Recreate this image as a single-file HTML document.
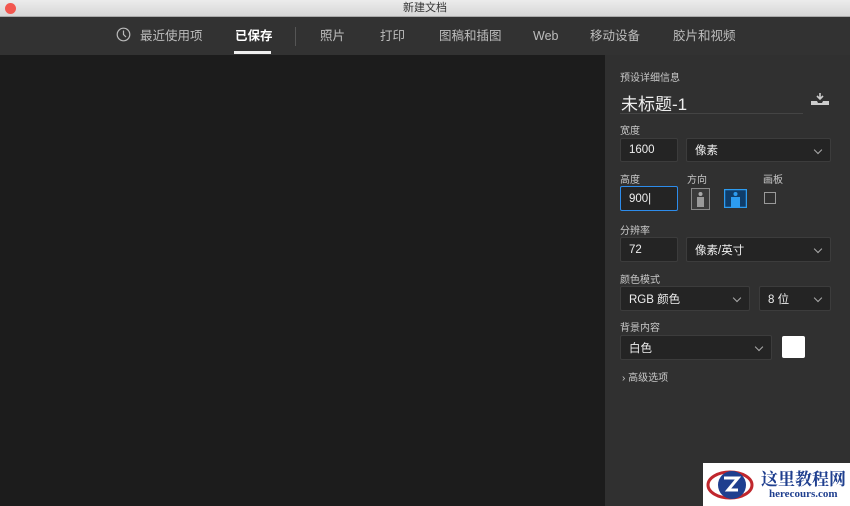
<!DOCTYPE html>
<html><head><meta charset="utf-8"><style>
*{box-sizing:border-box;margin:0;padding:0}
body{width:850px;height:506px;overflow:hidden;background:#1c1c1c;font-family:"Liberation Sans","Noto Sans CJK SC",sans-serif;position:relative}
.title{position:absolute;left:0;top:0;width:850px;height:17px;background:linear-gradient(#ececec,#d6d6d6);border-bottom:1px solid #aaa;text-align:center;font-size:11px;line-height:17px;color:#333}
.dot{position:absolute;left:5px;top:3px;width:11px;height:11px;border-radius:50%;background:#f2574f}
.tabs{position:absolute;left:0;top:17px;width:850px;height:38px;background:#323232}
.tab{position:absolute;top:11px;height:16px;line-height:16px;font-size:12.5px;color:#bdbdbd}
.canvas{position:absolute;left:0;top:55px;width:605px;height:451px;background:#1c1c1c}
.panel{position:absolute;left:605px;top:55px;width:245px;height:451px;background:#303030}
.lbl{position:absolute;font-size:10px;color:#c8c8c8}
.box{position:absolute;background:#242424;border:1px solid #3c3c3c;border-radius:2px;color:#eee;font-size:11.5px;padding-left:8px;display:flex;align-items:center}
.chev{position:absolute;right:9px;top:8px;width:6px;height:6px;border-right:1.3px solid #aaa;border-bottom:1.3px solid #aaa;transform:rotate(45deg)}
</style></head><body>
<div class="title"><div class="dot"></div>新建文档</div>
<div class="tabs">
<svg style="position:absolute;left:116px;top:10px" width="15" height="15" viewBox="0 0 15 15"><circle cx="7.5" cy="7.5" r="6.3" fill="none" stroke="#bbb" stroke-width="1.2"/><path d="M7.5 3.5V7.5L10 10" fill="none" stroke="#bbb" stroke-width="1.2"/></svg>
<div class="tab" style="left:140px">最近使用项</div>
<div class="tab" style="left:235px;color:#fff;font-weight:bold">已保存</div>
<div style="position:absolute;left:234px;top:34px;width:37px;height:3px;background:#eee"></div>
<div style="position:absolute;left:295px;top:10px;width:1px;height:19px;background:#555"></div>
<div class="tab" style="left:320px">照片</div>
<div class="tab" style="left:380px">打印</div>
<div class="tab" style="left:439px">图稿和插图</div>
<div class="tab" style="left:533px">Web</div>
<div class="tab" style="left:590px">移动设备</div>
<div class="tab" style="left:673px">胶片和视频</div>
</div>
<div class="canvas"></div>
<div class="panel">
<div class="lbl" style="left:15px;top:14px">预设详细信息</div>
<div style="position:absolute;left:16px;top:35px;font-size:17px;color:#eee">未标题-1</div>
<div style="position:absolute;left:15px;top:58px;width:183px;height:1px;background:#444"></div>
<svg style="position:absolute;left:205px;top:37px" width="20" height="14" viewBox="0 0 20 14"><path d="M10 1v6M7 4l3 3 3-3" stroke="#ccc" stroke-width="1.6" fill="none"/><path d="M1 13V9h6l1 2h4l1-2h6v4z" fill="#ccc"/></svg>
<div class="lbl" style="left:15px;top:67px">宽度</div>
<div class="box" style="left:15px;top:83px;width:58px;height:24px">1600</div>
<div class="box" style="left:81px;top:83px;width:145px;height:24px">像素<div class="chev"></div></div>
<div class="lbl" style="left:15px;top:116px">高度</div>
<div class="lbl" style="left:82px;top:116px">方向</div>
<div class="lbl" style="left:158px;top:116px">画板</div>
<div class="box" style="left:15px;top:131px;width:58px;height:25px;border:1.5px solid #2d8ceb">900|</div>
<svg style="position:absolute;left:86px;top:133px" width="19" height="22" viewBox="0 0 19 22"><rect x="0.5" y="0.5" width="18" height="21" fill="#3a3a3a" stroke="#888"/><circle cx="9.5" cy="6" r="2" fill="#aaa"/><rect x="6" y="9" width="7" height="10" fill="#999"/></svg>
<svg style="position:absolute;left:119px;top:134px" width="23" height="19" viewBox="0 0 23 19"><rect x="0.5" y="0.5" width="22" height="18" fill="#0f3d6a" stroke="#2d9cf0" stroke-width="1.5"/><circle cx="11.5" cy="5" r="2" fill="#2d9cf0"/><rect x="7" y="8" width="9" height="10" fill="#2d9cf0"/></svg>
<div style="position:absolute;left:159px;top:137px;width:12px;height:12px;border:1.3px solid #999"></div>
<div class="lbl" style="left:15px;top:167px">分辨率</div>
<div class="box" style="left:15px;top:182px;width:58px;height:25px">72</div>
<div class="box" style="left:81px;top:182px;width:145px;height:25px">像素/英寸<div class="chev"></div></div>
<div class="lbl" style="left:15px;top:216px">颜色模式</div>
<div class="box" style="left:15px;top:231px;width:130px;height:25px">RGB 颜色<div class="chev"></div></div>
<div class="box" style="left:154px;top:231px;width:72px;height:25px">8 位<div class="chev"></div></div>
<div class="lbl" style="left:15px;top:264px">背景内容</div>
<div class="box" style="left:15px;top:280px;width:152px;height:25px">白色<div class="chev"></div></div>
<div style="position:absolute;left:177px;top:281px;width:23px;height:22px;background:#fff;border-radius:2px"></div>
<div class="lbl" style="left:17px;top:314px">›&nbsp;高级选项</div>
</div>
<div style="position:absolute;left:703px;top:463px;width:147px;height:43px;background:#fff">
<svg style="position:absolute;left:2px;top:3px" width="50" height="38" viewBox="0 0 50 38"><ellipse cx="25" cy="19" rx="22" ry="13" fill="none" stroke="#c0272d" stroke-width="3"/><circle cx="27" cy="19" r="14" fill="#1f3f8f"/><path d="M19 12h14l-10 12h10" stroke="#fff" stroke-width="3" fill="none"/></svg>
<div style="position:absolute;left:58px;top:2px;font-size:17px;font-weight:bold;color:#1f3f8f;font-family:'Noto Serif CJK SC',serif">这里教程网</div>
<div style="position:absolute;left:66px;top:25px;font-size:11px;font-weight:bold;color:#1f3f8f;font-family:'Liberation Serif',serif">herecours.com</div>
</div>
</body></html>
